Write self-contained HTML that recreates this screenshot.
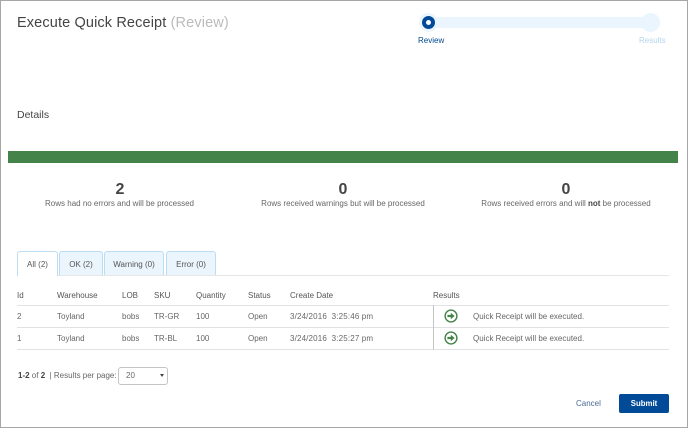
<!DOCTYPE html>
<html>
<head>
<meta charset="utf-8">
<style>
html,body{margin:0;padding:0;background:#fff}
#p{position:relative;width:688px;height:428px;overflow:hidden;background:#fff;font-family:"Liberation Sans",sans-serif;color:#666}
#p .t{position:absolute;white-space:nowrap;font-size:8px;line-height:14px;color:#666}
.b{position:absolute;background:#a6a6a6}
.tab{position:absolute;top:251px;height:24px;box-sizing:border-box;border:1px solid #bcdcf2;border-bottom:none;border-radius:3px 3px 0 0;background:#eaf5fd;font-size:8px;line-height:25px;text-align:center;color:#555}
.hl{position:absolute;height:1px;background:#e2e2e2;left:17px;width:652px}
.c{position:absolute;text-align:center;white-space:nowrap}
</style>
</head>
<body>
<div id="p">
<div class="b" style="left:0;top:0;width:688px;height:1px"></div>
<div class="b" style="left:0;top:0;width:1px;height:428px"></div>
<div class="b" style="left:687px;top:0;width:1px;height:428px"></div>
<div class="b" style="left:0;top:427px;width:688px;height:1px"></div>

<div class="t" style="left:17px;top:14px;font-size:14.5px;line-height:18px;color:#444;letter-spacing:.13px">Execute Quick Receipt <span style="color:#bbb">(Review)</span></div>

<div style="position:absolute;left:428px;top:17px;width:222px;height:11px;background:#eaf5fe"></div>
<div style="position:absolute;left:419px;top:13px;width:19px;height:19px;border-radius:50%;background:#eaf5fe"></div>
<div style="position:absolute;left:641px;top:13px;width:19px;height:19px;border-radius:50%;background:#eaf5fe"></div>
<div style="position:absolute;left:422px;top:16px;width:13px;height:13px;box-sizing:border-box;border:4px solid #004a98;border-radius:50%;background:#fff"></div>
<div class="t" style="left:418px;top:34px;color:#004a8f;font-size:8px">Review</div>
<div class="t" style="left:639px;top:34px;color:#b5d5ef;font-size:8px">Results</div>

<div class="t" style="left:17px;top:109px;font-size:10.5px;line-height:13px;color:#444">Details</div>

<div style="position:absolute;left:8px;top:151px;width:670px;height:12px;background:#44844a"></div>

<div class="c" style="left:0;width:240px;top:181px;font-size:16px;font-weight:bold;line-height:18px;color:#444">2</div>
<div class="c" style="left:0;width:239px;top:197px;font-size:8px;line-height:14px;color:#666">Rows had no errors and will be processed</div>
<div class="c" style="left:223px;width:240px;top:181px;font-size:16px;font-weight:bold;line-height:18px;color:#444">0</div>
<div class="c" style="left:223px;width:240px;top:197px;font-size:8px;line-height:14px;color:#666">Rows received warnings but will be processed</div>
<div class="c" style="left:446px;width:240px;top:181px;font-size:16px;font-weight:bold;line-height:18px;color:#444">0</div>
<div class="c" style="left:446px;width:240px;top:197px;font-size:8px;line-height:14px;color:#666">Rows received errors and will <b style="color:#444">not</b> be processed</div>

<div class="hl" style="top:275px;background:#e6e6e6"></div>
<div class="tab" style="left:17px;width:41px;height:25px;background:#fff">All (2)</div>
<div class="tab" style="left:59px;width:44px">OK (2)</div>
<div class="tab" style="left:104px;width:60px">Warning (0)</div>
<div class="tab" style="left:166px;width:50px">Error (0)</div>

<div class="t" style="left:17px;top:289px;color:#555">Id</div>
<div class="t" style="left:57px;top:289px;color:#555">Warehouse</div>
<div class="t" style="left:122px;top:289px;color:#555">LOB</div>
<div class="t" style="left:154px;top:289px;color:#555">SKU</div>
<div class="t" style="left:196px;top:289px;color:#555">Quantity</div>
<div class="t" style="left:248px;top:289px;color:#555">Status</div>
<div class="t" style="left:290px;top:289px;color:#555">Create Date</div>
<div class="t" style="left:433px;top:289px;color:#555">Results</div>
<div class="hl" style="top:305px"></div>
<div class="hl" style="top:327px"></div>
<div class="hl" style="top:349px"></div>
<div style="position:absolute;left:433px;top:305px;width:1px;height:45px;background:#c4c4c4"></div>

<div class="t" style="left:17px;top:310px">2</div>
<div class="t" style="left:57px;top:310px">Toyland</div>
<div class="t" style="left:122px;top:310px">bobs</div>
<div class="t" style="left:154px;top:310px">TR-GR</div>
<div class="t" style="left:196px;top:310px">100</div>
<div class="t" style="left:248px;top:310px">Open</div>
<div class="t" style="left:290px;top:310px;white-space:pre;letter-spacing:.15px">3/24/2016  3:25:46 pm</div>
<div class="t" style="left:473px;top:310px">Quick Receipt will be executed.</div>

<div class="t" style="left:17px;top:332px">1</div>
<div class="t" style="left:57px;top:332px">Toyland</div>
<div class="t" style="left:122px;top:332px">bobs</div>
<div class="t" style="left:154px;top:332px">TR-BL</div>
<div class="t" style="left:196px;top:332px">100</div>
<div class="t" style="left:248px;top:332px">Open</div>
<div class="t" style="left:290px;top:332px;white-space:pre;letter-spacing:.15px">3/24/2016  3:25:27 pm</div>
<div class="t" style="left:473px;top:332px">Quick Receipt will be executed.</div>

<svg style="position:absolute;left:444px;top:309px" width="14" height="14" viewBox="0 0 14 14"><circle cx="7" cy="7" r="5.9" fill="#fff" stroke="#44844a" stroke-width="1.4"/><path d="M3.4 5.9H6.8V3.8L10.6 7 6.8 10.2V8.1H3.4z" fill="#44844a"/></svg>
<svg style="position:absolute;left:444px;top:331px" width="14" height="14" viewBox="0 0 14 14"><circle cx="7" cy="7" r="5.9" fill="#fff" stroke="#44844a" stroke-width="1.4"/><path d="M3.4 5.9H6.8V3.8L10.6 7 6.8 10.2V8.1H3.4z" fill="#44844a"/></svg>

<div class="t" style="left:18px;top:369px"><b style="color:#444">1-2</b> of <b style="color:#444">2</b> &nbsp;| Results per page:</div>
<div style="position:absolute;left:118px;top:367px;width:50px;height:18px;box-sizing:border-box;border:1px solid #c4c4c4;border-radius:3px;background:#fff"></div>
<div class="t" style="left:126px;top:369px">20</div>
<div style="position:absolute;left:160px;top:374px;width:0;height:0;border-left:2px solid transparent;border-right:2px solid transparent;border-top:3px solid #444"></div>

<div class="t" style="left:576px;top:397px;color:#4b6b94">Cancel</div>
<div style="position:absolute;left:619px;top:394px;width:50px;height:19px;border-radius:2px;background:#004a98;color:#fff;font-size:7.8px;font-weight:bold;line-height:20px;text-align:center">Submit</div>
</div>
</body>
</html>
